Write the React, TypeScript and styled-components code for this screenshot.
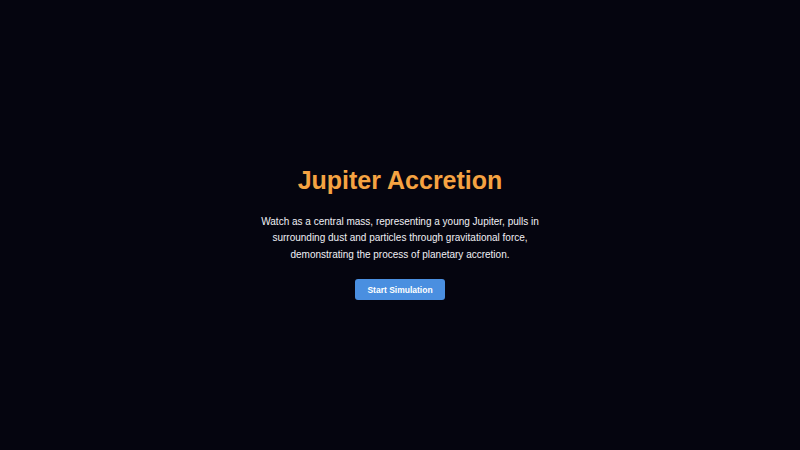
import React from 'react';
import styled, { createGlobalStyle } from 'styled-components';

const GlobalStyle = createGlobalStyle`
  html, body {
    margin: 0;
    padding: 0;
    background: #05050f;
  }
  body {
    font-family: 'Liberation Sans', Arial, sans-serif;
  }
`;

const App = () => {
  const handleStart = () => {
    console.log('start');
  };

  return (
    <St.Page>
      <GlobalStyle />
      <St.Intro>
        <St.Title>Jupiter Accretion</St.Title>
        <St.Description>
          Watch as a central mass, representing a young Jupiter, pulls in surrounding dust and
          particles through gravitational force, demonstrating the process of planetary accretion.
        </St.Description>
        <St.StartButton onClick={handleStart}>Start Simulation</St.StartButton>
      </St.Intro>
    </St.Page>
  );
};

const St = {
  Page: styled.div`
    width: 100vw;
    height: 100vh;
    display: flex;
    align-items: center;
    justify-content: center;
    background: #05050f;
  `,

  Intro: styled.div`
    display: flex;
    flex-direction: column;
    align-items: center;
    text-align: center;
    padding-top: 15px;
  `,

  Title: styled.h1`
    margin: 0 0 19px;
    font-size: 25px;
    font-weight: 700;
    color: #f5a342;
    line-height: 30px;
  `,

  Description: styled.p`
    margin: 0 0 16px;
    max-width: 285px;
    font-size: 10px;
    line-height: 16.5px;
    color: #f0f0f5;
  `,

  StartButton: styled.button`
    padding: 0 12px;
    height: 21px;
    border: none;
    border-radius: 3px;
    background: #4a8fe0;
    color: #ffffff;
    font-family: 'Liberation Sans', Arial, sans-serif;
    font-size: 8.5px;
    font-weight: 700;
    cursor: pointer;
  `,
};

export default App;
